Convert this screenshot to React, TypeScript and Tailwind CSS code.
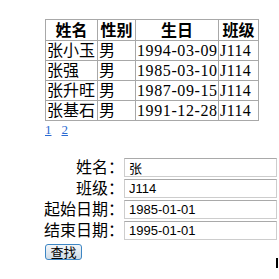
const rows = [
  { name: "张小玉", sex: "男", birth: "1994-03-09", cls: "J114" },
  { name: "张强", sex: "男", birth: "1985-03-10", cls: "J114" },
  { name: "张升旺", sex: "男", birth: "1987-09-15", cls: "J114" },
  { name: "张基石", sex: "男", birth: "1991-12-28", cls: "J114" },
];

const fields = [
  { label: "姓名：", value: "张" },
  { label: "班级：", value: "J114" },
  { label: "起始日期：", value: "1985-01-01" },
  { label: "结束日期：", value: "1995-01-01" },
];

export default function App() {
  return (
    <div className="w-[279px] h-[279px] bg-white pl-[44px] pt-[19px] text-black font-['Liberation_Serif','Noto_Sans_CJK_SC',serif]">
      {/* Results table */}
      <table className="ml-[1px] w-[213px] table-fixed border-collapse text-[16px]">
        <colgroup>
          <col className="w-[52px]" />
          <col className="w-[38px]" />
          <col className="w-[83px]" />
          <col className="w-[40px]" />
        </colgroup>
        <thead>
          <tr>
            {["姓名", "性别", "生日", "班级"].map((h) => (
              <th key={h} className="h-[21px] border border-[#a8a8a8] p-0 text-center font-bold leading-[19px]">
                {h}
              </th>
            ))}
          </tr>
        </thead>
        <tbody>
          {rows.map((r) => (
            <tr key={r.name}>
              <td className="h-[20px] border border-[#a8a8a8] px-[1px] py-0 leading-[19px] whitespace-nowrap">{r.name}</td>
              <td className="h-[20px] border border-[#a8a8a8] px-[1px] py-0 leading-[19px]">{r.sex}</td>
              <td className="h-[20px] border border-[#a8a8a8] px-[1px] py-0 leading-[19px] tracking-[0.6px] whitespace-nowrap">{r.birth}</td>
              <td className="h-[20px] border border-[#a8a8a8] px-[1px] py-0 leading-[19px] tracking-[0.4px]">{r.cls}</td>
            </tr>
          ))}
        </tbody>
      </table>

      {/* Pagination */}
      <div className="ml-[1px] mt-[1px] flex gap-[10px] text-[13px] leading-[15px]">
        <a href="#" className="text-[#2a6ad2] underline">1</a>
        <a href="#" className="text-[#2a6ad2] underline">2</a>
      </div>

      {/* Search form */}
      <div className="mt-[21px] grid w-[235px] grid-cols-[80px_153px] gap-y-[2px]">
        {fields.map((f) => (
          <div key={f.label} className="contents">
            <label className="text-right text-[16px] leading-[19px] whitespace-nowrap">
              {f.label}
            </label>
            <input
              defaultValue={f.value}
              className="h-[19px] w-[153px] border border-[#cdcdcd] border-t-[#a9a9a9] bg-white px-[4px] text-[13px] leading-[17px] text-black outline-none font-['Liberation_Sans','Noto_Sans_CJK_SC',sans-serif]"
            />
          </div>
        ))}
      </div>

      <div className="mt-[4px] flex items-start justify-between w-[235px]">
        <button className="ml-[1px] h-[16px] w-[37px] rounded-[3px] border border-[#3d86c4] bg-gradient-to-b from-[#f4f7fa] to-[#cfdbe6] p-0 text-[13px] leading-[13px] text-black font-['Liberation_Sans','Noto_Sans_CJK_SC',sans-serif]">
          查找
        </button>
        <span className="mt-[14px] mr-[1px] h-[10px] w-[2px] bg-black" />
      </div>
    </div>
  );
}
